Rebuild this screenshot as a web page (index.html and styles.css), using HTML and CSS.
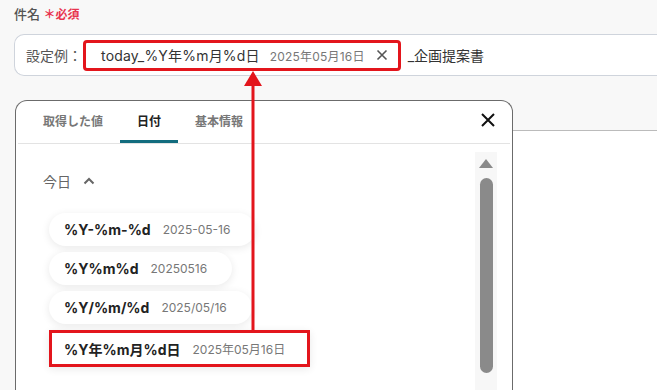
FILE: index.html
```html
<!DOCTYPE html>
<html lang="ja">
<head>
    <meta charset="UTF-8">
    <meta name="viewport" content="width=device-width, initial-scale=1.0">
    <title>件名 - 日付の設定</title>
    <link rel="stylesheet" href="styles.css">
</head>
<body>
    <div class="field">
        <div class="field-label">件名 <span class="required">＊必須</span></div>
        <div class="input">
            <span class="example">設定例：</span>
            <span class="chip highlight">
                <span class="chip-key">today_%Y年%m月%d日</span>
                <span class="chip-value">2025年05月16日</span>
                <svg class="chip-close" width="12" height="12" viewBox="0 0 12 12">
                    <path d="M1.5 1.5 L10.5 10.5 M10.5 1.5 L1.5 10.5" stroke="#555" stroke-width="1.6" fill="none"/>
                </svg>
            </span>
            <span class="suffix">_企画提案書</span>
        </div>
    </div>

    <div class="lower">
        <div class="panel">
            <div class="panel-head">
                <div class="tabs">
                    <div class="tab">取得した値</div>
                    <div class="tab active">日付</div>
                    <div class="tab">基本情報</div>
                </div>
                <svg class="close" width="16" height="16" viewBox="0 0 16 16">
                    <path d="M2 2 L14 14 M14 2 L2 14" stroke="#111" stroke-width="2" fill="none"/>
                </svg>
            </div>
            <div class="panel-body">
                <div class="list">
                    <div class="section">
                        今日
                        <svg width="12" height="8" viewBox="0 0 12 8">
                            <path d="M1.5 6.5 L6 2 L10.5 6.5" stroke="#666" stroke-width="2" fill="none"/>
                        </svg>
                    </div>
                    <div class="item"><b>%Y-%m-%d</b><span>2025-05-16</span></div>
                    <div class="item"><b>%Y%m%d</b><span>20250516</span></div>
                    <div class="item"><b>%Y/%m/%d</b><span>2025/05/16</span></div>
                    <div class="item highlight"><b>%Y年%m月%d日</b><span>2025年05月16日</span></div>
                </div>
                <div class="scrollbar">
                    <div class="scroll-up"></div>
                    <div class="scroll-thumb"></div>
                </div>
            </div>
        </div>
        <div class="backdrop"></div>
    </div>

    <!-- annotation arrow from the chosen format up to the subject field -->
    <svg class="arrow" width="30" height="262" viewBox="0 0 30 262">
        <path d="M15 14 L15 262" stroke="#e3151c" stroke-width="3"/>
        <path d="M6 15 L15 0 L24 15 Z" fill="#e3151c"/>
    </svg>
</body>
</html>
```

FILE: styles.css
```css
* {
    margin: 0;
    padding: 0;
    box-sizing: border-box;
}

body {
    font-family: 'Inter', 'Noto Sans CJK JP', sans-serif;
    background: #f8f8f8;
    color: #333;
    width: 657px;
    height: 390px;
    overflow: hidden;
    position: relative;
}

.field {
    padding: 5px 0 0 14px;
}

.field-label {
    font-size: 13px;
    line-height: 18px;
    color: #555;
    font-weight: 500;
}

.required {
    color: #e8344e;
    font-size: 12px;
    font-weight: 700;
}

.input {
    margin-top: 10px;
    height: 42px;
    background: #fff;
    border: 1px solid #cfd4dc;
    border-right: none;
    border-radius: 10px 0 0 10px;
    display: flex;
    align-items: center;
    padding-left: 11px;
    font-size: 14px;
}

.example {
    color: #555;
    width: 57px;
}

.chip {
    height: 31px;
    display: flex;
    align-items: center;
    padding: 0 10px 0 15px;
    background: #fff;
    border-radius: 4px;
}

.chip-key {
    color: #333;
    letter-spacing: 0.2px;
}

.chip-value {
    color: #777;
    font-size: 12px;
    margin-left: 10px;
    letter-spacing: 0.2px;
}

.chip-close {
    margin-left: 11px;
}

.suffix {
    margin-left: 7px;
    color: #333;
}

.highlight {
    border: 3px solid #e3151c;
}

.lower {
    display: flex;
    margin-top: 24px;
}

.panel {
    margin-left: 15px;
    width: 498px;
    height: 291px;
    background: #fff;
    border: 1px solid #6b6b6b;
    border-bottom: none;
    border-radius: 12px 12px 0 0;
    flex-shrink: 0;
}

.panel-head {
    display: flex;
    align-items: center;
    justify-content: space-between;
    margin: 0 2px;
    border-bottom: 1px solid #e3e3e3;
    padding-right: 14px;
}

.tabs {
    display: flex;
    padding-left: 8px;
}

.tab {
    padding: 11px 17px 11px;
    font-size: 12px;
    font-weight: 600;
    color: #777;
    border-bottom: 3px solid transparent;
}

.tab.active {
    color: #222;
    font-weight: 700;
    border-bottom-color: #126c7e;
    border-radius: 2px 2px 0 0;
}

.close {
    margin-top: -4px;
}

.panel-body {
    display: flex;
    justify-content: space-between;
}

.list {
    padding: 27px 0 0 27px;
    display: flex;
    flex-direction: column;
    align-items: flex-start;
    gap: 6px;
}

.section {
    font-size: 14px;
    color: #666;
    display: flex;
    align-items: center;
    gap: 12px;
    margin-bottom: 16px;
}

.item {
    margin-left: 6px;
    height: 33px;
    display: flex;
    align-items: center;
    gap: 12px;
    padding: 0 25px 0 15px;
    background: #fff;
    border-radius: 17px;
    box-shadow: 0 2px 8px rgba(0, 0, 0, 0.09);
}

.item b {
    font-size: 14px;
    font-weight: 700;
    color: #222;
}

.item span {
    font-size: 12px;
    color: #777;
}

.item.highlight {
    height: 37px;
    padding: 0 22px 0 12px;
    border-radius: 0;
}

.scrollbar {
    margin: 8px 15px 0 0;
    width: 22px;
    height: 240px;
    background: #f7f7f7;
    display: flex;
    flex-direction: column;
    align-items: center;
}

.scroll-up {
    margin-top: 7px;
    width: 0;
    height: 0;
    border-left: 7px solid transparent;
    border-right: 7px solid transparent;
    border-bottom: 9px solid #8a8a8a;
}

.scroll-thumb {
    margin-top: 10px;
    width: 13px;
    height: 195px;
    background: #8a8a8a;
    border-radius: 7px;
}

.backdrop {
    flex: 1;
    margin-top: 30px;
    border-top: 1px solid #bbb;
    background: #fff;
}

.arrow {
    position: absolute;
    left: 238px;
    top: 71px;
}
```
